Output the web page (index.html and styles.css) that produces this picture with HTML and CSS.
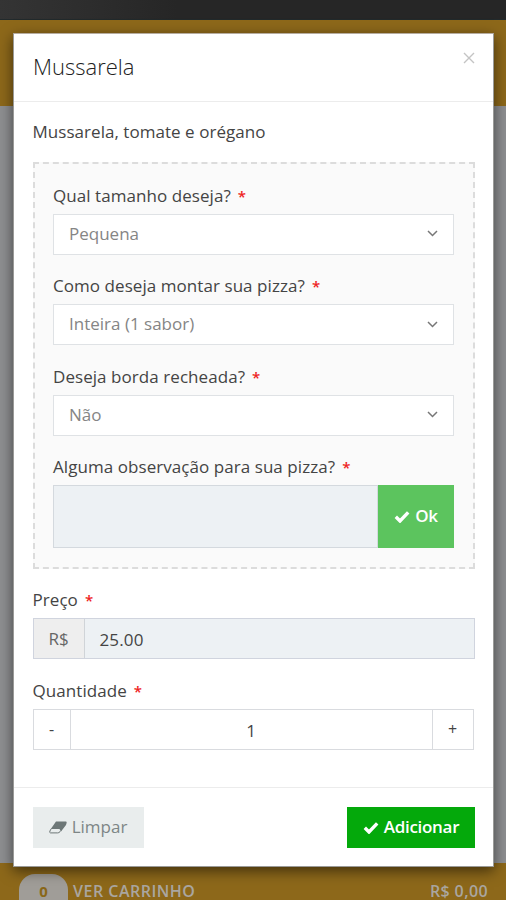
FILE: index.html
```html
<!DOCTYPE html>
<html lang="pt-BR">
<head>
<meta charset="utf-8">
<title>Mussarela</title>
<link rel="stylesheet" href="styles.css">
</head>
<body>
<div class="page">
  <div class="topbar"></div>
  <div class="banner"></div>
  <main class="content"></main>
  <footer class="cart">
    <span class="cart-count">0</span>
    <span class="cart-label">VER CARRINHO</span>
    <span class="cart-total">R$ 0,00</span>
  </footer>
</div>
<div class="modal">
  <header class="modal-header">
    <h1 class="title">Mussarela</h1>
    <svg class="close" viewBox="0 0 12 12"><path d="M1 1l10 10M11 1L1 11"/></svg>
  </header>
  <div class="modal-body">
    <p class="description">Mussarela, tomate e orégano</p>
    <section class="options">
      <div class="field">
        <div class="label"><span>Qual tamanho deseja?</span><span class="req">*</span></div>
        <div class="control select"><span>Pequena</span><svg class="chevron" viewBox="0 0 11 7"><path d="M1 1l4.500 4.500L10 1"/></svg></div>
      </div>
      <div class="field">
        <div class="label"><span>Como deseja montar sua pizza?</span><span class="req">*</span></div>
        <div class="control select"><span>Inteira (1 sabor)</span><svg class="chevron" viewBox="0 0 11 7"><path d="M1 1l4.500 4.500L10 1"/></svg></div>
      </div>
      <div class="field">
        <div class="label"><span>Deseja borda recheada?</span><span class="req">*</span></div>
        <div class="control select"><span>Não</span><svg class="chevron" viewBox="0 0 11 7"><path d="M1 1l4.500 4.500L10 1"/></svg></div>
      </div>
      <div class="field">
        <div class="label"><span>Alguma observação para sua pizza?</span><span class="req">*</span></div>
        <div class="note">
          <div class="note-text"></div>
          <div class="ok"><svg class="check" viewBox="0 0 16 13"><path d="M1.800 6.800l4.200 4.200L14.200 2.300"/></svg><span>Ok</span></div>
        </div>
      </div>
    </section>
    <div class="field price">
      <div class="label"><span>Preço</span><span class="req">*</span></div>
      <div class="control group"><span class="addon">R$</span><span class="amount">25.00</span></div>
    </div>
    <div class="field">
      <div class="label"><span>Quantidade</span><span class="req">*</span></div>
      <div class="control stepper"><span class="minus">-</span><span class="quantity">1</span><span class="plus">+</span></div>
    </div>
  </div>
  <footer class="modal-footer">
    <div class="button clear"><svg class="eraser" viewBox="0 0 18 13"><path class="eraser-body" d="M7 0.500H17Q18 .5 17.600 2L17 4L12 10.500L10.500 8H1.800Z"/><path class="eraser-tip" d="M2.200 7.800L.9 10Q.3 11.900 1.500 11.900H8.500Q10 11.900 11 10.700L12 9.500"/></svg><span>Limpar</span></div>
    <div class="button add"><svg class="check" viewBox="0 0 16 13"><path d="M1.800 6.800l4.200 4.200L14.200 2.300"/></svg><span>Adicionar</span></div>
  </footer>
</div>
</body>
</html>
```
FILE: styles.css
```css
* { box-sizing: border-box; }
body {
  margin: 0;
  height: 900px;
  overflow: hidden;
  font-family: "Open Sans", sans-serif;
  font-size: 17px;
  line-height: 24px;
  color: #444;
}
.page { height: 900px; display: flex; flex-direction: column; }
.topbar { height: 20px; background: linear-gradient(90deg, #343434, #262626 35%); border-bottom: 1px solid #222a2c; }
.banner { height: 86px; background: #8d681a; }
.content { flex: 1; background: #8e8f91; }
.cart {
  height: 37px;
  padding: 11px 18px 0 19px;
  display: flex;
  align-items: flex-start;
  background: #8d681a;
  color: #aaa6a0;
  white-space: nowrap;
}
.cart-count {
  width: 49px;
  height: 26px;
  border-radius: 16px 16px 0 0;
  background: #a09d98;
  color: #896718;
  text-align: center;
  line-height: 35px;
  font-size: 15px;
  font-weight: 700;
}
.cart-label, .cart-total { line-height: 17px; font-size: 16px; font-weight: 600; margin-top: 9px; }
.cart-label { margin-left: 5px; letter-spacing: .5px; }
.cart-total { margin-left: auto; letter-spacing: .4px; }

.modal {
  position: absolute;
  left: 13px;
  top: 33px;
  width: 481px;
  height: 834px;
  display: flex;
  flex-direction: column;
  background: #fff;
  border: 1px solid #9a9a98;
  border-top-color: #b6aca0;
  box-shadow: 0 4px 13px rgba(0, 0, 0, .55);
}
.modal-header {
  height: 68px;
  padding: 17px 18px 0 19px;
  display: flex;
  justify-content: space-between;
  border-bottom: 1px solid #ececec;
}
.title { margin: 0; font-size: 22px; line-height: 31px; font-weight: 300; color: #222; }
.close { width: 12px; height: 12px; margin-top: 1px; }
.close path { fill: none; stroke: #c4c4c4; stroke-width: 1.4; }

.modal-body { flex: 1; padding: 18px 18px 0 18.5px; }
.description { margin: 0 0 18px; letter-spacing: .04px; }
.options { height: 407px; padding: 19.5px 19px 0 18.5px; border: 2px dashed #dcdcdc; background: #fafafa; }
.field { margin-bottom: 19.5px; }
.label { height: 24px; margin-bottom: 6px; display: flex; white-space: nowrap; letter-spacing: .06px; }
.req { margin-left: 7px; color: #e22; font-size: 15px; font-weight: 600; }
.control { height: 41px; display: flex; align-items: center; border: 1px solid #dfe2e5; background: #fff; }
.select { padding: 0 15px 1px; justify-content: space-between; color: #858585; }
.chevron { width: 11px; height: 7px; }
.chevron path { fill: none; stroke: #777; stroke-width: 1.5; }
.note { height: 63px; display: flex; }
.note-text { flex: 1; background: #edf1f4; border: 1px solid #d4d9de; }
.ok { width: 76px; padding-bottom: 1px; display: flex; align-items: center; justify-content: center; gap: 5px; background: #5cc45e; color: #fff; font-weight: 600; letter-spacing: -.3px; }
.check { width: 16px; height: 13px; }
.check path { fill: none; stroke: #fff; stroke-width: 3.4; }

.price { margin-top: 19px; }
.group, .stepper { align-items: stretch; line-height: 39px; }
.group { border-color: #d0d4de; background: #edf1f4; }
.addon { width: 51px; text-align: center; background: #eee; border-right: 1px solid #d0d4d8; color: #666; }
.amount { padding-left: 15px; line-height: 41px; letter-spacing: .15px; }
.stepper { width: 441px; border-color: #d9dbdf; }
.minus, .plus { text-align: center; font-size: 16px; }
.minus { width: 37px; border-right: 1px solid #d9dbdf; }
.plus { width: 41px; border-left: 1px solid #d9dbdf; }
.quantity { flex: 1; text-align: center; line-height: 41px; }

.modal-footer { height: 79px; padding: 19px 18px 0; display: flex; justify-content: space-between; border-top: 1px solid #ececec; }
.button { height: 41px; padding-bottom: 1px; display: flex; align-items: center; justify-content: center; gap: 5px; }
.clear { width: 111px; margin-left: .5px; background: #e9eded; color: #7d8686; }
.eraser { width: 18px; height: 13px; }
.eraser-body { fill: #6d7777; }
.eraser-tip { fill: none; stroke: #6d7777; stroke-width: 1; }
.add { width: 128px; background: #04a90b; color: #fff; font-weight: 600; letter-spacing: -.3px; }
```
